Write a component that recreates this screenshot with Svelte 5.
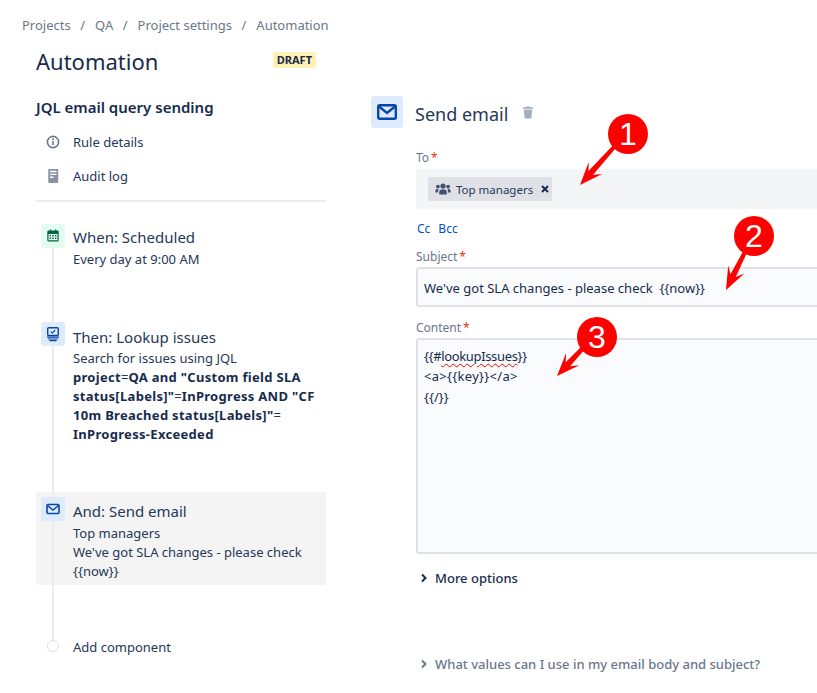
<script>
  function arrow(x1, y1, x2, y2) {
    const L = Math.hypot(x2 - x1, y2 - y1);
    const ux = (x2 - x1) / L, uy = (y2 - y1) / L;
    const nx = -uy, ny = ux;
    const p = (a, w) => `${(x1 + ux * a + nx * w).toFixed(1)},${(y1 + uy * a + ny * w).toFixed(1)}`;
    const h = L - 20;
    return [p(0, 2), p(h + 4, 3), p(h - 3, 9), p(L, 0), p(h - 3, -9), p(h + 4, -3), p(0, -2)].join(' ');
  }
  const marks = [
    { n: 1, cx: 628, cy: 134, a: arrow(615, 146, 580, 185) },
    { n: 2, cx: 754, cy: 236, a: arrow(745, 252, 726, 290) },
    { n: 3, cx: 597, cy: 337, a: arrow(584, 347, 557, 376) }
  ];
</script>

<div class="page">
  <nav class="crumbs">
    <span>Projects</span><i>/</i><span>QA</span><i>/</i><span>Project settings</span><i>/</i><span>Automation</span>
  </nav>

  <div class="cols">
    <aside class="left">
      <div class="head">
        <h1>Automation</h1>
        <span class="badge">DRAFT</span>
      </div>
      <h2>JQL email query sending</h2>
      <div class="link">
        <span class="lic">
          <svg width="16" height="16" viewBox="0 0 16 16"><circle cx="8" cy="8" r="5.6" fill="none" stroke="#6b778c" stroke-width="1.6"/><rect x="7.2" y="7.2" width="1.6" height="3.8" fill="#6b778c"/><circle cx="8" cy="5.3" r="1" fill="#6b778c"/></svg>
        </span>
        Rule details
      </div>
      <div class="link second">
        <span class="lic">
          <svg width="16" height="16" viewBox="0 0 16 16"><path fill-rule="evenodd" fill="#8993a4" d="M4 1h8.500a.7.7 0 0 1 .7.7v12.600a.7.7 0 0 1-.7.7H4a.7.7 0 0 1-.7-.7V1.700A.7.7 0 0 1 4 1zM5 2.800v1.500h6.500V2.800zm0 3v1.300h6.500V5.800zm0 2.800v1.300h3.500V8.600z"/></svg>
        </span>
        Audit log
      </div>
      <div class="divider"></div>

      <div class="flow">
        <div class="rail"></div>

        <div class="step s1">
          <span class="ic green">
            <svg width="16" height="16" viewBox="0 0 16 16" fill="#006644"><path fill-rule="evenodd" d="M3.500 2.500h1.300V1.500h1.200v1h4v-1h1.200v1h1.300a1.200 1.200 0 0 1 1.200 1.200v8.600a1.200 1.200 0 0 1-1.200 1.200h-9a1.200 1.200 0 0 1-1.200-1.200V3.700a1.200 1.200 0 0 1 1.200-1.200zM3.500 6v6.300h9V6z"/><rect x="4.600" y="7" width="1.500" height="1.400"/><rect x="7.200" y="7" width="1.500" height="1.400"/><rect x="9.900" y="7" width="1.500" height="1.400"/><rect x="4.600" y="9.600" width="1.500" height="1.400"/><rect x="7.200" y="9.600" width="1.500" height="1.400"/><rect x="9.900" y="9.600" width="1.500" height="1.400"/></svg>
          </span>
          <div class="title">When: Scheduled</div>
          <div class="desc">Every day at 9:00 AM</div>
        </div>

        <div class="step s2">
          <span class="ic blue">
            <svg width="16" height="16" viewBox="0 0 16 16" fill="none" stroke="#0747a6"><rect x="2.700" y="1.700" width="10.600" height="7.800" rx="1" stroke-width="1.400"/><path d="M5.800 5.600l1.500 1.400 3-2.900" stroke-width="1.200"/><path d="M2 11.200h12M3 13h10M4.500 14.700h7" stroke-width="1.200"/></svg>
          </span>
          <div class="title">Then: Lookup issues</div>
          <div class="desc">
            <div>Search for issues using JQL</div>
            <div class="q"><b>project</b>=<b>QA and "Custom field SLA</b></div>
            <div class="q"><b>status[Labels]"</b>=<b>InProgress AND "CF</b></div>
            <div class="q"><b>10m Breached status[Labels]"</b>=</div>
            <div class="q"><b>InProgress-Exceeded</b></div>
          </div>
        </div>

        <div class="step s3">
          <span class="ic blue">
            <svg width="16" height="16" viewBox="0 0 16 16" fill="none" stroke="#0747a6" stroke-width="1.600"><rect x="2" y="3.500" width="12" height="9" rx="1"/><path d="M2.500 4.500L8 9l5.500-4.500"/></svg>
          </span>
          <div class="title">And: Send email</div>
          <div class="desc">Top managers<br />We've got SLA changes - please check {'{{now}}'}</div>
        </div>

        <div class="step s4">
          <span class="dot"></span>
          <div class="desc">Add component</div>
        </div>
      </div>
    </aside>

    <main class="right">
      <div class="rhead">
        <span class="big">
          <svg width="24" height="24" viewBox="0 0 24 24" fill="none" stroke="#0747a6" stroke-width="2.400"><rect x="3.200" y="5.200" width="17.600" height="13.600" rx="1.500"/><path d="M4 6.500l8 6.500 8-6.500"/></svg>
        </span>
        <span class="rtitle">Send email</span>
        <svg class="trash" width="16" height="16" viewBox="0 0 16 16" fill="#a5adba"><path d="M6.500 2.500h3l.5.800h3v1.400H3V3.300h3zM3.800 5.500h8.400l-.8 8a1 1 0 0 1-1 .9H5.600a1 1 0 0 1-1-.9z"/></svg>
      </div>

      <div class="form">
        <div class="lbl">To<em>*</em></div>
        <div class="to">
          <span class="chip">
            <svg width="16" height="14" viewBox="0 0 16 14" fill="#42526e"><circle cx="8" cy="4" r="2.600"/><circle cx="2.900" cy="4.600" r="1.900"/><circle cx="13.100" cy="4.600" r="1.900"/><path d="M4.200 12.500V9.800a2.500 2.500 0 0 1 2.500-2.300h2.600a2.500 2.500 0 0 1 2.500 2.300v2.700z"/><path d="M.4 10.500V8.600A1.700 1.700 0 0 1 2 7h1.600a3.500 3.500 0 0 0-.5 2v1.500zM15.600 10.500V8.600A1.700 1.700 0 0 0 14 7h-1.600a3.500 3.500 0 0 1 .5 2v1.500z"/></svg>
            <span class="chiptext">Top managers</span>
            <svg class="x" width="8" height="8" viewBox="0 0 8 8" stroke="#172b4d" stroke-width="2"><path d="M1 1l6 6M7 1L1 7"/></svg>
          </span>
        </div>
        <div class="cc"><span>Cc</span><span>Bcc</span></div>
        <div class="lbl sub">Subject<em>*</em></div>
        <div class="field subj">We've got SLA changes - please check &nbsp;{'{{now}}'}</div>
        <div class="lbl cont">Content<em>*</em></div>
        <div class="field area">
          <div class="narrow">{'{{#'}<span class="squig">lookupIssues</span>{'}}'}</div>
          <div class="wide">&lt;a&gt;{'{{key}}'}&lt;/a&gt;</div>
          <div>{'{{/}}'}</div>
        </div>
        <div class="more">
          <svg width="8" height="10" viewBox="0 0 8 10" fill="none" stroke="#172b4d" stroke-width="2"><path d="M2 1.500L5.500 5 2 8.500"/></svg>
          More options
        </div>
        <div class="values">
          <svg width="8" height="10" viewBox="0 0 8 10" fill="none" stroke="#6b778c" stroke-width="2"><path d="M2 1.500L5.500 5 2 8.500"/></svg>
          What values can I use in my email body and subject?
        </div>
      </div>
    </main>
  </div>

  <svg class="marks" width="817" height="693" viewBox="0 0 817 693">
    {#each marks as m}
      <polygon points={m.a} fill="#f00" />
      <circle cx={m.cx} cy={m.cy} r="20" fill="#f00" />
      <text x={m.cx} y={m.cy + 11} text-anchor="middle">{m.n}</text>
    {/each}
  </svg>
</div>

<style>
  :global(body) {
    margin: 0;
    background: #fff;
    overflow: hidden;
  }
  .page {
    position: relative;
    width: 817px;
    height: 693px;
    overflow: hidden;
    font-family: "Noto Sans", "Open Sans", sans-serif;
    font-size: 13px;
    color: #172b4d;
  }
  .crumbs {
    display: flex;
    height: 20px;
    line-height: 20px;
    padding: 15px 0 0 22px;
    color: #6b778c;
    font-size: 13px;
  }
  .crumbs i {
    font-style: normal;
    margin: 0 10px 0 9.5px;
  }
  .cols {
    display: flex;
    padding-left: 36px;
  }
  .left {
    width: 290px;
    flex: none;
  }
  .head {
    display: flex;
    justify-content: space-between;
    align-items: flex-start;
    height: 33px;
    margin-top: 10px;
    padding-right: 10px;
  }
  h1 {
    margin: 0;
    font-size: 22px;
    line-height: 32px;
    font-weight: 400;
  }
  .badge {
    margin-top: 7px;
    height: 16px;
    line-height: 16px;
    padding: 0 4px;
    font-size: 11px;
    font-weight: 700;
    background: #fff0b3;
    border-radius: 3px;
    color: #172b4d;
  }
  h2 {
    margin: 18px 0 0;
    font-size: 15px;
    line-height: 22px;
    font-weight: 600;
  }
  .link {
    display: flex;
    align-items: center;
    height: 20px;
    margin-top: 14px;
    padding-left: 9px;
    color: #253858;
  }
  .link.second {
    margin-top: 14px;
  }
  .lic {
    display: flex;
    width: 16px;
    margin-right: 12px;
  }
  .divider {
    height: 2px;
    background: #ebecf0;
    margin-top: 14px;
  }
  .flow {
    position: relative;
    padding-top: 22px;
  }
  .rail {
    position: absolute;
    z-index: 1;
    left: 16px;
    top: 45px;
    height: 395px;
    width: 2px;
    background: #ebecf0;
  }
  .step {
    position: relative;
    padding-left: 37px;
    border-radius: 3px;
  }
  .s1 { padding-top: 3px; }
  .s2 { margin-top: 53px; padding-top: 5px; }
  .s3 { margin-top: 48px; padding: 9px 5px 4px 37px; background: #f4f4f4; }
  .s4 { margin-top: 53px; }
  .ic {
    position: absolute;
    z-index: 2;
    left: 5px;
    top: 0;
    width: 24px;
    height: 24px;
    display: flex;
    align-items: center;
    justify-content: center;
    border-radius: 3px;
  }
  .s3 .ic { top: 5px; }
  .green { background: #e3fcef; }
  .blue { background: #deebff; }
  .dot {
    position: absolute;
    z-index: 2;
    left: 11px;
    top: 2px;
    width: 10px;
    height: 10px;
    border: 1px solid #dfe1e6;
    border-radius: 50%;
    background: #fff;
  }
  .title {
    font-size: 15px;
    line-height: 20px;
    margin-bottom: 3px;
    color: #253858;
  }
  .s2 .title {
    margin-bottom: 2px;
  }
  .desc {
    line-height: 19px;
    color: #253858;
  }
  .q {
    white-space: nowrap;
  }
  .desc b {
    font-weight: 700;
    letter-spacing: 0.3px;
    color: #172b4d;
  }
  .right {
    margin-left: 45px;
    flex: none;
    width: 600px;
    margin-top: 61px;
  }
  .rhead {
    display: flex;
    align-items: flex-start;
  }
  .big {
    width: 32px;
    height: 32px;
    background: #deebff;
    border-radius: 3px;
    display: flex;
    align-items: center;
    justify-content: center;
  }
  .rtitle {
    font-size: 18px;
    line-height: 26px;
    margin: 5px 0 0 12px;
    color: #253858;
  }
  .trash {
    margin: 8px 0 0 12px;
  }
  .form {
    margin-left: 45px;
  }
  .lbl {
    font-size: 12px;
    line-height: 16px;
    color: #6b778c;
    margin-top: 22px;
  }
  .lbl em {
    color: #de350b;
    font-style: normal;
    margin-left: 2px;
  }
  .to {
    margin-top: 3px;
    height: 40px;
    box-sizing: border-box;
    padding: 8px 12px;
    background: #f4f5f7;
    border-radius: 3px;
  }
  .chip {
    display: inline-flex;
    align-items: center;
    height: 24px;
    width: 124px;
    box-sizing: border-box;
    padding-left: 7px;
    background: #dfe1e6;
    border-radius: 2px;
  }
  .chiptext {
    margin-left: 5px;
    font-size: 11.5px;
    color: #253858;
  }
  .x {
    margin-left: 8px;
  }
  .cc {
    display: flex;
    gap: 8px;
    margin: 12px 0 0 1px;
    font-size: 12px;
    line-height: 16px;
    color: #0052cc;
  }
  .lbl.sub {
    margin-top: 12px;
  }
  .lbl.cont {
    margin-top: 13px;
  }
  .field {
    box-sizing: border-box;
    margin-top: 2px;
    border: 2px solid #dfe1e6;
    border-radius: 3px;
    background: #fafbfc;
    padding: 0 6px;
    color: #172b4d;
  }
  .subj {
    height: 40px;
    line-height: 38px;
  }
  .area {
    height: 216px;
    padding-top: 6px;
    line-height: 20.3px;
  }
  .narrow {
    letter-spacing: -0.35px;
  }
  .wide {
    letter-spacing: 0.3px;
  }
  .squig {
    text-decoration: underline wavy #e00;
    text-decoration-thickness: 1px;
    text-underline-offset: 2px;
  }
  .more,
  .values {
    display: flex;
    align-items: center;
    gap: 7px;
    padding-left: 4px;
    line-height: 20px;
    font-weight: 500;
  }
  .more {
    margin-top: 14px;
  }
  .values {
    margin-top: 66px;
    color: #6b778c;
  }
  .marks {
    position: absolute;
    z-index: 3;
    left: 0;
    top: 0;
    pointer-events: none;
  }
  .marks text {
    font-family: "Liberation Sans", sans-serif;
    font-size: 32px;
    fill: #fff;
  }
</style>
